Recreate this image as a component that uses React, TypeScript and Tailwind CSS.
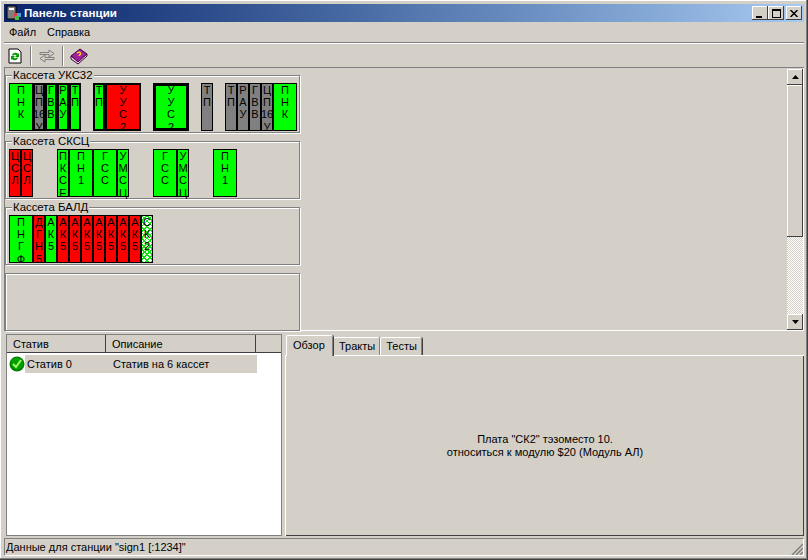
const font = "font-['Liberation_Sans',Arial,sans-serif]";

type Mod = { at: number; w: number; text: string[]; color: string; border?: string; top?: string };

const GREEN = "bg-[#00ff00]";
const RED = "bg-[#ff0000]";
const GRAY = "bg-[#808080]";
const HATCH =
  "bg-[repeating-linear-gradient(45deg,#10e010_0_1.2px,transparent_1.2px_4px),repeating-linear-gradient(-45deg,#10e010_0_1.2px,#f4fff4_1.2px_4px)]";

const BOLD = "border-2";
const THICK = "border-[3px] overflow-hidden";

const t = (s: string) => s.split(" ");

const row1: Mod[] = [
  { at: 9, w: 24, text: t("П Н К"), color: GREEN },
  { at: 33, w: 12, text: t("Ц П 16 У"), color: GRAY, border: BOLD, top: "-mt-px" },
  { at: 45, w: 12, text: t("Г В В"), color: GREEN, border: BOLD, top: "-mt-px" },
  { at: 57, w: 12, text: t("Р А У"), color: GREEN, border: BOLD, top: "-mt-px" },
  { at: 69, w: 12, text: t("Т П"), color: GREEN, border: BOLD, top: "-mt-px" },
  { at: 93, w: 12, text: t("Т П"), color: GREEN, border: BOLD, top: "-mt-px" },
  { at: 105, w: 36, text: t("У У С 2"), color: RED, border: BOLD, top: "-mt-px" },
  { at: 153, w: 36, text: t("У У С 2"), color: GREEN, border: THICK, top: "-mt-[2px]" },
  { at: 201, w: 12, text: t("Т П"), color: GRAY },
  { at: 225, w: 12, text: t("Т П"), color: GRAY },
  { at: 237, w: 12, text: t("Р А У"), color: GRAY },
  { at: 249, w: 12, text: t("Г В В"), color: GRAY },
  { at: 261, w: 12, text: t("Ц П 16 У"), color: GRAY },
  { at: 273, w: 24, text: t("П Н К"), color: GREEN },
];

const row2: Mod[] = [
  { at: 9, w: 12, text: t("Ц С Л"), color: RED },
  { at: 21, w: 12, text: t("Ц С Л"), color: RED },
  { at: 57, w: 12, text: t("П К С Е"), color: GREEN },
  { at: 69, w: 24, text: t("П Н 1"), color: GREEN },
  { at: 93, w: 24, text: t("Г С С"), color: GREEN },
  { at: 117, w: 12, text: t("У М С Ц"), color: GREEN },
  { at: 153, w: 24, text: t("Г С С"), color: GREEN },
  { at: 177, w: 12, text: t("У М С Ц"), color: GREEN },
  { at: 213, w: 24, text: t("П Н 1"), color: GREEN },
];

const row3: Mod[] = [
  { at: 9, w: 24, text: t("П Н Г Ф"), color: GREEN },
  { at: 33, w: 12, text: t("Д Г Н 5"), color: RED },
  { at: 45, w: 12, text: t("А К 5"), color: GREEN },
  { at: 57, w: 12, text: t("А К 5"), color: RED },
  { at: 69, w: 12, text: t("А К 5"), color: RED },
  { at: 81, w: 12, text: t("А К 5"), color: RED },
  { at: 93, w: 12, text: t("А К 5"), color: RED },
  { at: 105, w: 12, text: t("А К 5"), color: RED },
  { at: 117, w: 12, text: t("А К 5"), color: RED },
  { at: 129, w: 12, text: t("А К 5"), color: RED },
  { at: 141, w: 12, text: t("С К 2"), color: HATCH },
];

function Module({ mod }: { mod: Mod }) {
  return (
    <div
      style={{ left: mod.at - 6, width: mod.w }}
      className={`absolute top-[7px] h-[48px] border-black ${mod.border ?? "border"} ${mod.color}`}
    >
      <div className={`flex h-full flex-col items-center text-black ${mod.top ?? ""}`}>
        {mod.text.map((c, i) => (
          <span key={i} className="h-[12.2px] shrink-0 text-[11px] leading-[12px] whitespace-nowrap">
            {c}
          </span>
        ))}
      </div>
    </div>
  );
}

function Cassette({ title, mods }: { title?: string; mods?: Mod[] }) {
  return (
    <div className="relative h-[58px] w-[295px] border border-[#808080] shadow-[inset_1px_1px_0_#fff,1px_1px_0_#fff]">
      {title && (
        <span className="absolute -top-[7px] left-[6px] bg-[#d4d0c8] px-px text-[11.4px] leading-[13px] text-black">
          {title}
        </span>
      )}
      {mods?.map((m) => <Module key={m.at} mod={m} />)}
    </div>
  );
}

function CaptionButton({ children }: { children: React.ReactNode }) {
  return (
    <div className="flex h-[14px] w-[16px] items-center justify-center bg-[#d4d0c8] shadow-[inset_-1px_-1px_0_#404040,inset_1px_1px_0_#fff]">
      {children}
    </div>
  );
}

function ScrollButton({ up }: { up?: boolean }) {
  return (
    <div className="flex h-[16px] w-[16px] items-center justify-center bg-[#d4d0c8] shadow-[inset_-1px_-1px_0_#404040,inset_1px_1px_0_#fff]">
      <svg width="7" height="4" viewBox="0 0 7 4">
        <path d={up ? "M3.5 0 7 4H0Z" : "M0 0h7L3.5 4Z"} fill="#000" />
      </svg>
    </div>
  );
}

function Tab({ label, active }: { label: string; active?: boolean }) {
  return (
    <div
      className={`flex items-center rounded-t-[2px] border-t border-l border-white bg-[#d4d0c8] shadow-[inset_-1px_0_0_#808080,1px_0_0_#404040] ${
        active ? "z-10 -mb-px h-[21px] w-[47px] px-[6px] pb-[2px]" : "h-[18px] px-[5px]"
      }`}
    >
      <span className="text-[11px] leading-none text-black">{label}</span>
    </div>
  );
}

export default function App() {
  return (
    <div
      className={`${font} flex h-[560px] w-[808px] flex-col bg-[#d4d0c8] p-[4px] text-[11px] text-black shadow-[inset_-1px_-1px_0_#404040,inset_-2px_-2px_0_#808080,inset_1px_1px_0_#fff]`}
    >
      {/* заголовок окна */}
      <div className="flex h-[18px] shrink-0 items-center bg-gradient-to-r from-[#0a246a] to-[#a6caf0] pr-[2px] pl-[2px]">
        <svg width="16" height="16" viewBox="0 0 16 16" className="shrink-0">
          <rect x="1" y="1" width="9" height="13" fill="#808080" stroke="#000" />
          <rect x="3" y="3" width="5" height="2" fill="#fff" />
          <rect x="8" y="8" width="4" height="4" fill="#e04040" />
          <rect x="11" y="8" width="4" height="4" fill="#40a0e0" />
          <rect x="9" y="11" width="4" height="4" fill="#40c040" />
        </svg>
        <span className="ml-[2px] text-[11.6px] font-bold text-white">Панель станции</span>
        <div className="ml-auto flex items-center">
          <CaptionButton>
            <span className="mt-[7px] mr-[2px] block h-[2px] w-[6px] bg-black" />
          </CaptionButton>
          <CaptionButton>
            <span className="block h-[9px] w-[9px] border border-t-2 border-black" />
          </CaptionButton>
          <div className="ml-[2px]">
            <CaptionButton>
              <svg width="8" height="7" viewBox="0 0 8 7">
                <path d="M0.5 0 7.5 7M7.5 0 0.5 7" stroke="#000" strokeWidth="1.5" />
              </svg>
            </CaptionButton>
          </div>
        </div>
      </div>

      {/* меню */}
      <div className="flex h-[20px] shrink-0 items-center gap-[11px] px-[5px]">
        <span>Файл</span>
        <span>Справка</span>
      </div>
      <div className="h-[2px] shrink-0 border-t border-b border-t-[#808080] border-b-white" />

      {/* панель инструментов */}
      <div className="flex h-[23px] shrink-0 items-center">
        <svg width="16" height="16" viewBox="0 0 16 16" className="ml-[3px]">
          <path d="M2 1h9l3 3v11H2Z" fill="#fff" stroke="#000" />
          <path d="M5 7a3.5 3.5 0 0 1 6-1l1-1v4H8l1.500-1.500A2 2 0 0 0 6 8ZM11 10a3.500 3.500 0 0 1-6 1l-1 1V8h4l-1.500 1.500A2 2 0 0 0 10 9Z" fill="#00a000" />
        </svg>
        <div className="ml-[7px] h-[20px] w-[2px] border-r border-l border-r-white border-l-[#808080]" />
        <svg width="16" height="16" viewBox="0 0 16 16" className="ml-[7px]">
          <path d="M1 4.500h9V2l5 3.500L10 9V6.500H1ZM15 9.500H6V7L1 10.500 6 14v-2.500h9Z" fill="#d4d0c8" stroke="#808080" />
        </svg>
        <div className="ml-[7px] h-[20px] w-[2px] border-r border-l border-r-white border-l-[#808080]" />
        <svg width="18" height="18" viewBox="0 0 18 18" className="ml-[6px]">
          <path d="M1 9 10 2l7 5-9 8Z" fill="#a020a0" stroke="#400040" />
          <path d="M1 9v3l7 5 9-8V7l-9 8Z" fill="#e8e8e8" stroke="#400040" />
          <path d="M7 6.500c1-2 4-1.500 3.500.5-.3 1-1.500 1-1.500 2" fill="none" stroke="#ffe000" strokeWidth="1.300" />
        </svg>
      </div>

      {/* верхняя панель с кассетами */}
      <div className="flex h-[264px] shrink-0 border-t border-l border-t-[#808080] border-l-[#808080] shadow-[inset_-1px_-1px_0_#fff]">
        <div className="flex w-[782px] flex-col gap-[8px] pt-[7px]">
          <Cassette title="Кассета УКС32" mods={row1} />
          <Cassette title="Кассета СКСЦ" mods={row2} />
          <Cassette title="Кассета БАЛД" mods={row3} />
          <Cassette />
        </div>
        <div className="mt-px mb-px flex w-[16px] flex-col bg-[repeating-conic-gradient(#fff_0_25%,#d4d0c8_0_50%)] bg-[length:2px_2px]">
          <ScrollButton up />
          <div className="h-[152px] bg-[#d4d0c8] shadow-[inset_-1px_-1px_0_#404040,inset_1px_1px_0_#fff]" />
          <div className="flex-1" />
          <ScrollButton />
        </div>
      </div>

      {/* нижняя часть */}
      <div className="mt-[3px] flex min-h-0 flex-1">
        <div className="ml-[2px] flex w-[276px] shrink-0 flex-col border border-[#808080] bg-white">
          <div className="flex h-[18px] shrink-0 border-b border-[#404040] bg-[#d4d0c8]">
            <div className="flex w-[99px] items-center border-r border-[#404040] pt-[2px] pl-[6px]">Статив</div>
            <div className="flex w-[150px] items-center border-r border-[#404040] pt-[2px] pl-[6px]">Описание</div>
            <div className="flex-1" />
          </div>
          <div className="mt-[2px] flex h-[18px] items-center pl-[2px]">
            <svg width="16" height="16" viewBox="0 0 16 16" className="shrink-0">
              <circle cx="8" cy="8" r="7.500" fill="#008000" />
              <circle cx="8" cy="7.500" r="6" fill="#00a000" />
              <path d="M4 8l3 3 5-7" fill="none" stroke="#a0ff60" strokeWidth="2" />
            </svg>
            <div className="flex h-[18px] w-[232px] items-center bg-[#d4d0c8] pl-[2px]">
              <span className="w-[86px]">Статив 0</span>
              <span>Статив на 6 кассет</span>
            </div>
          </div>
        </div>
        <div className="ml-[3px] flex min-w-0 flex-1 flex-col pt-[1px]">
          <div className="flex h-[20px] shrink-0 items-end pl-px">
            <Tab label="Обзор" active />
            <Tab label="Тракты" />
            <Tab label="Тесты" />
          </div>
          <div className="flex flex-1 flex-col items-center justify-center border-t border-l border-t-white border-l-white leading-[13px] shadow-[inset_-1px_-1px_0_#404040]">
            <span>Плата "СК2" тэзоместо 10.</span>
            <span>относиться к модулю $20 (Модуль АЛ)</span>
          </div>
        </div>
      </div>

      {/* строка состояния */}
      <div className="relative mt-[2px] flex h-[18px] shrink-0 items-center border border-t-[#808080] border-r-white border-b-white border-l-[#808080] pl-[1px]">
        <span>Данные для станции "sign1 [:1234]"</span>
        <svg width="12" height="12" viewBox="0 0 12 12" className="absolute right-0 bottom-0">
          <path d="M12 1 1 12M12 5 5 12M12 9 9 12" stroke="#808080" strokeWidth="1.500" />
        </svg>
      </div>
    </div>
  );
}
